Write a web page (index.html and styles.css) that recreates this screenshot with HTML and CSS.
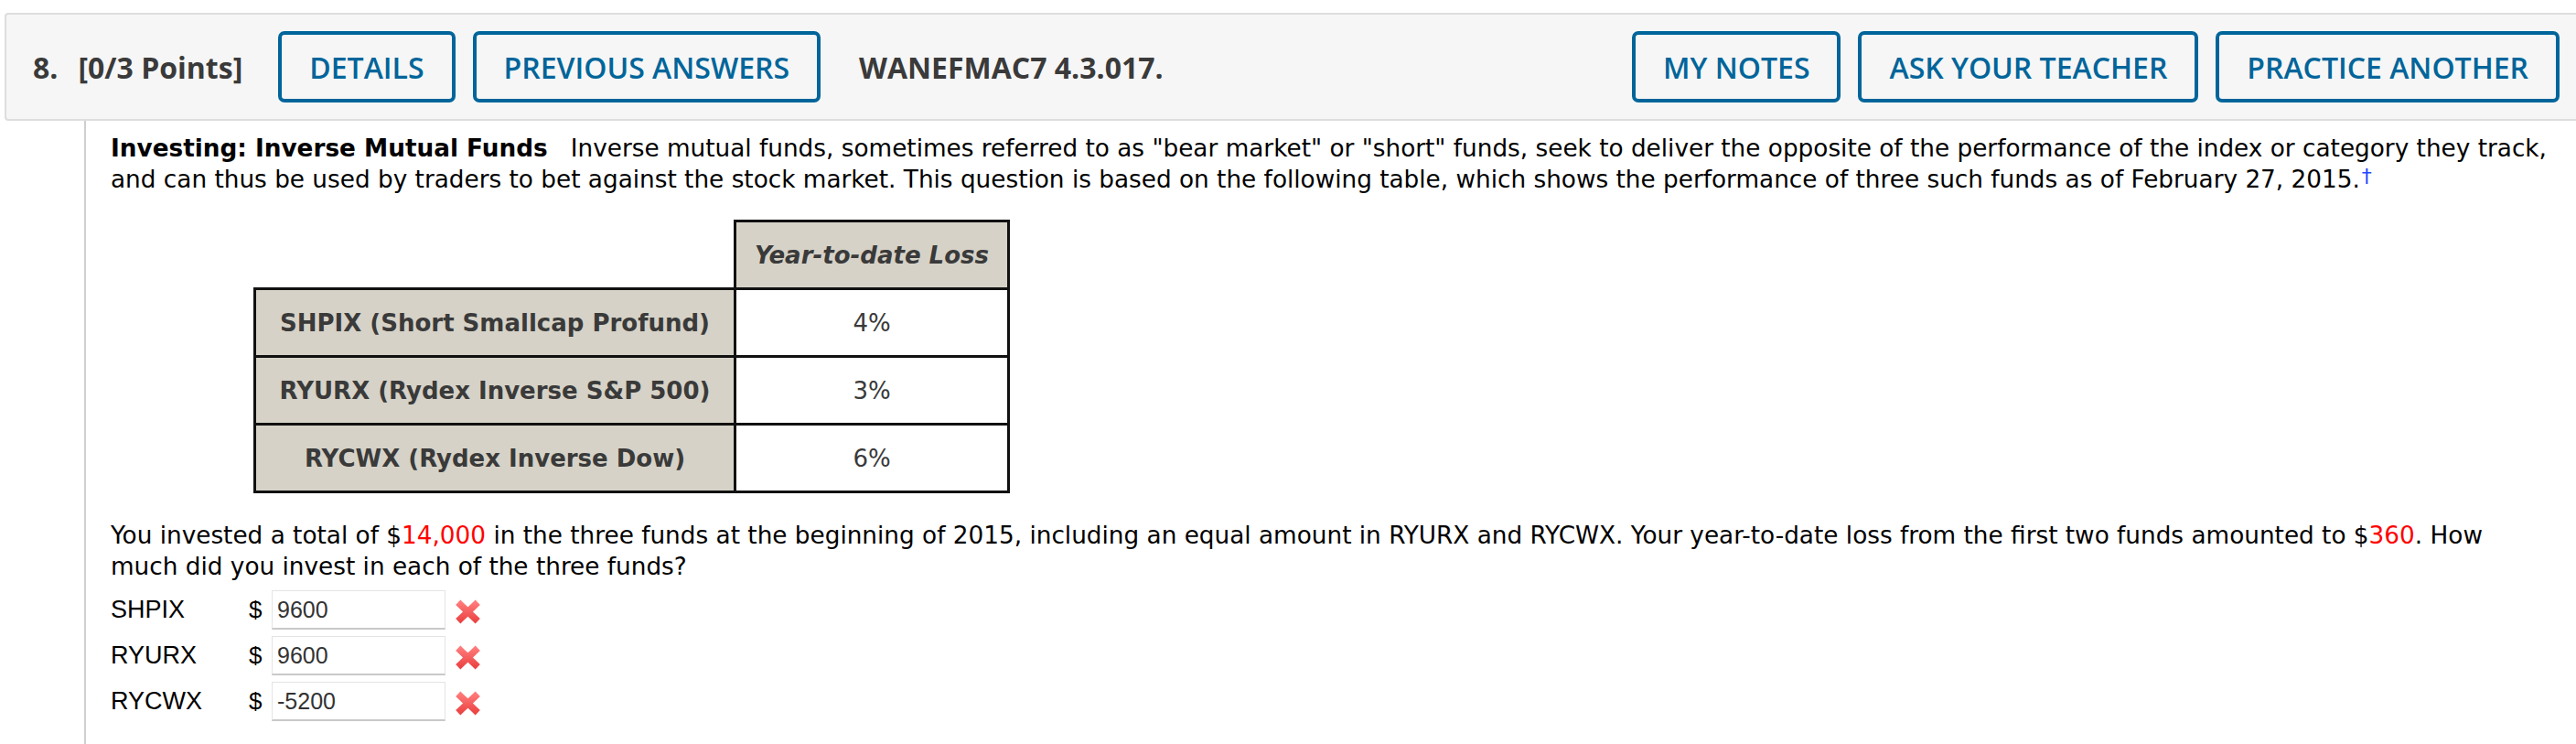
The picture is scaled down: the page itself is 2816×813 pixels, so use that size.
FILE: index.html
```html
<!DOCTYPE html>
<html>
<head>
<meta charset="utf-8">
<link rel="stylesheet" href="styles.css">
</head>
<body>
<div class="question">
  <div class="qhead">
    <span class="qnum">8.</span>
    <span class="points">[0/3 Points]</span>
    <span class="btn">DETAILS</span>
    <span class="btn">PREVIOUS ANSWERS</span>
    <span class="qid">WANEFMAC7 4.3.017.</span>
    <span class="spacer"></span>
    <span class="btn">MY NOTES</span>
    <span class="btn">ASK YOUR TEACHER</span>
    <span class="btn">PRACTICE ANOTHER</span>
  </div>
  <div class="qbody">
    <p class="intro"><b>Investing: Inverse Mutual Funds</b>&nbsp;&nbsp; Inverse mutual funds, sometimes referred to as "bear market" or "short" funds, seek to deliver the opposite of the performance of the index or category they track,<br>and can thus be used by traders to bet against the stock market. This question is based on the following table, which shows the performance of three such funds as of February 27, 2015.<span class="dagger">†</span></p>
    <table class="funds">
      <tr><td class="blank"></td><th class="colhead">Year-to-date Loss</th></tr>
      <tr><th class="rowhead">SHPIX (Short Smallcap Profund)</th><td>4%</td></tr>
      <tr><th class="rowhead">RYURX (Rydex Inverse S&amp;P 500)</th><td>3%</td></tr>
      <tr><th class="rowhead">RYCWX (Rydex Inverse Dow)</th><td>6%</td></tr>
    </table>
    <p class="problem">You invested a total of $<span class="red">14,000</span> in the three funds at the beginning of 2015, including an equal amount in RYURX and RYCWX. Your year-to-date loss from the first two funds amounted to $<span class="red">360</span>. How<br>much did you invest in each of the three funds?</p>
    <div class="answers">
      <div class="arow"><span class="alabel">SHPIX</span><span class="dollar">$</span><span class="ainput">9600</span><svg class="xmark" viewBox="0 0 27 25"><defs><linearGradient id="xg1" x1="0" y1="0" x2="0" y2="1"><stop offset="0" stop-color="#ff7a7a"/><stop offset="1" stop-color="#ec4444"/></linearGradient></defs><path d="M3.5 3 L23.5 22 M23.5 3 L3.5 22" stroke="url(#xg1)"/></svg></div>
      <div class="arow"><span class="alabel">RYURX</span><span class="dollar">$</span><span class="ainput">9600</span><svg class="xmark" viewBox="0 0 27 25"><path d="M3.5 3 L23.5 22 M23.5 3 L3.5 22" stroke="url(#xg1)"/></svg></div>
      <div class="arow"><span class="alabel">RYCWX</span><span class="dollar">$</span><span class="ainput">-5200</span><svg class="xmark" viewBox="0 0 27 25"><path d="M3.5 3 L23.5 22 M23.5 3 L3.5 22" stroke="url(#xg1)"/></svg></div>
    </div>
  </div>
</div>
</body>
</html>
```

FILE: styles.css
```css
html, body {
  margin: 0;
  padding: 0;
  background: #fff;
}
body {
  font-family: "DejaVu Sans", Verdana, sans-serif;
  color: #000;
}
.question {
  padding-top: 14px;
}
.qhead {
  margin-left: 5px;
  height: 118px;
  box-sizing: border-box;
  background: #f6f6f6;
  border: 2px solid #dedede;
  border-right: none;
  border-radius: 4px 0 0 4px;
  display: flex;
  align-items: center;
  padding-left: 29px;
  font-family: "Open Sans", sans-serif;
}
.qnum, .points, .qid {
  font-weight: 700;
  font-size: 32px;
  color: #3a3a3a;
}
.qnum { margin-right: 22px; }
.points { margin-right: 39px; }
.qid { margin-left: 23px; }
.spacer { flex: 1; }
.btn {
  box-sizing: border-box;
  height: 78px;
  display: inline-flex;
  align-items: center;
  padding: 0 30px;
  border: 4px solid #00659a;
  border-radius: 7px;
  color: #00659a;
  font-size: 32px;
  font-weight: 600;
  margin-right: 19px;
  background: #f6f6f6;
}
.btn:last-child { margin-right: 18px; }
.qbody {
  margin-left: 92px;
  border-left: 2px solid #cfcfcf;
  padding-left: 27px;
  padding-top: 13px;
  padding-bottom: 30px;
  font-size: 26.3px;
}
.intro, .problem {
  margin: 0;
  line-height: 34px;
  white-space: nowrap;
}
.intro b { font-weight: 700; }
.dagger {
  color: #1f45ff;
  font-size: 22px;
  position: relative;
  top: -5px;
  margin-left: 2px;
}
.funds {
  border-collapse: collapse;
  margin: 25px 0 29px 156px;
  color: #3a3a3a;
  font-size: 26px;
}
.funds th, .funds td {
  border: 3px solid #111;
  height: 71px;
  padding: 0;
  text-align: center;
}
.funds td.blank { border: none; border-right: 3px solid #111; border-bottom: 3px solid #111; }
.funds .colhead {
  background: #d6d2c7;
  font-style: italic;
  font-weight: 700;
  width: 296px;
}
.funds .rowhead {
  background: #d6d2c7;
  font-weight: 700;
  width: 522px;
}
.funds td { background: #fff; font-weight: 400; }
.red { color: #f00; }
.answers {
  margin-top: 9px;
  display: flex;
  flex-direction: column;
  gap: 7px;
  font-family: "Liberation Sans", Arial, sans-serif;
  font-size: 27px;
}
.arow {
  display: flex;
  align-items: center;
  height: 43px;
}
.alabel { width: 151px; }
.dollar { width: 25px; font-size: 26px; }
.ainput {
  box-sizing: border-box;
  width: 190px;
  height: 43px;
  border: 1px solid #e4e4e4;
  border-bottom: 2px solid #c9c9c9;
  padding-left: 5px;
  display: flex;
  align-items: center;
  color: #333;
  font-size: 25px;
}
.xmark {
  width: 29px;
  height: 27px;
  margin-left: 10px;
  margin-top: 4px;
}
.xmark path {
  stroke-width: 7;
  stroke-linecap: butt;
  fill: none;
}
```
